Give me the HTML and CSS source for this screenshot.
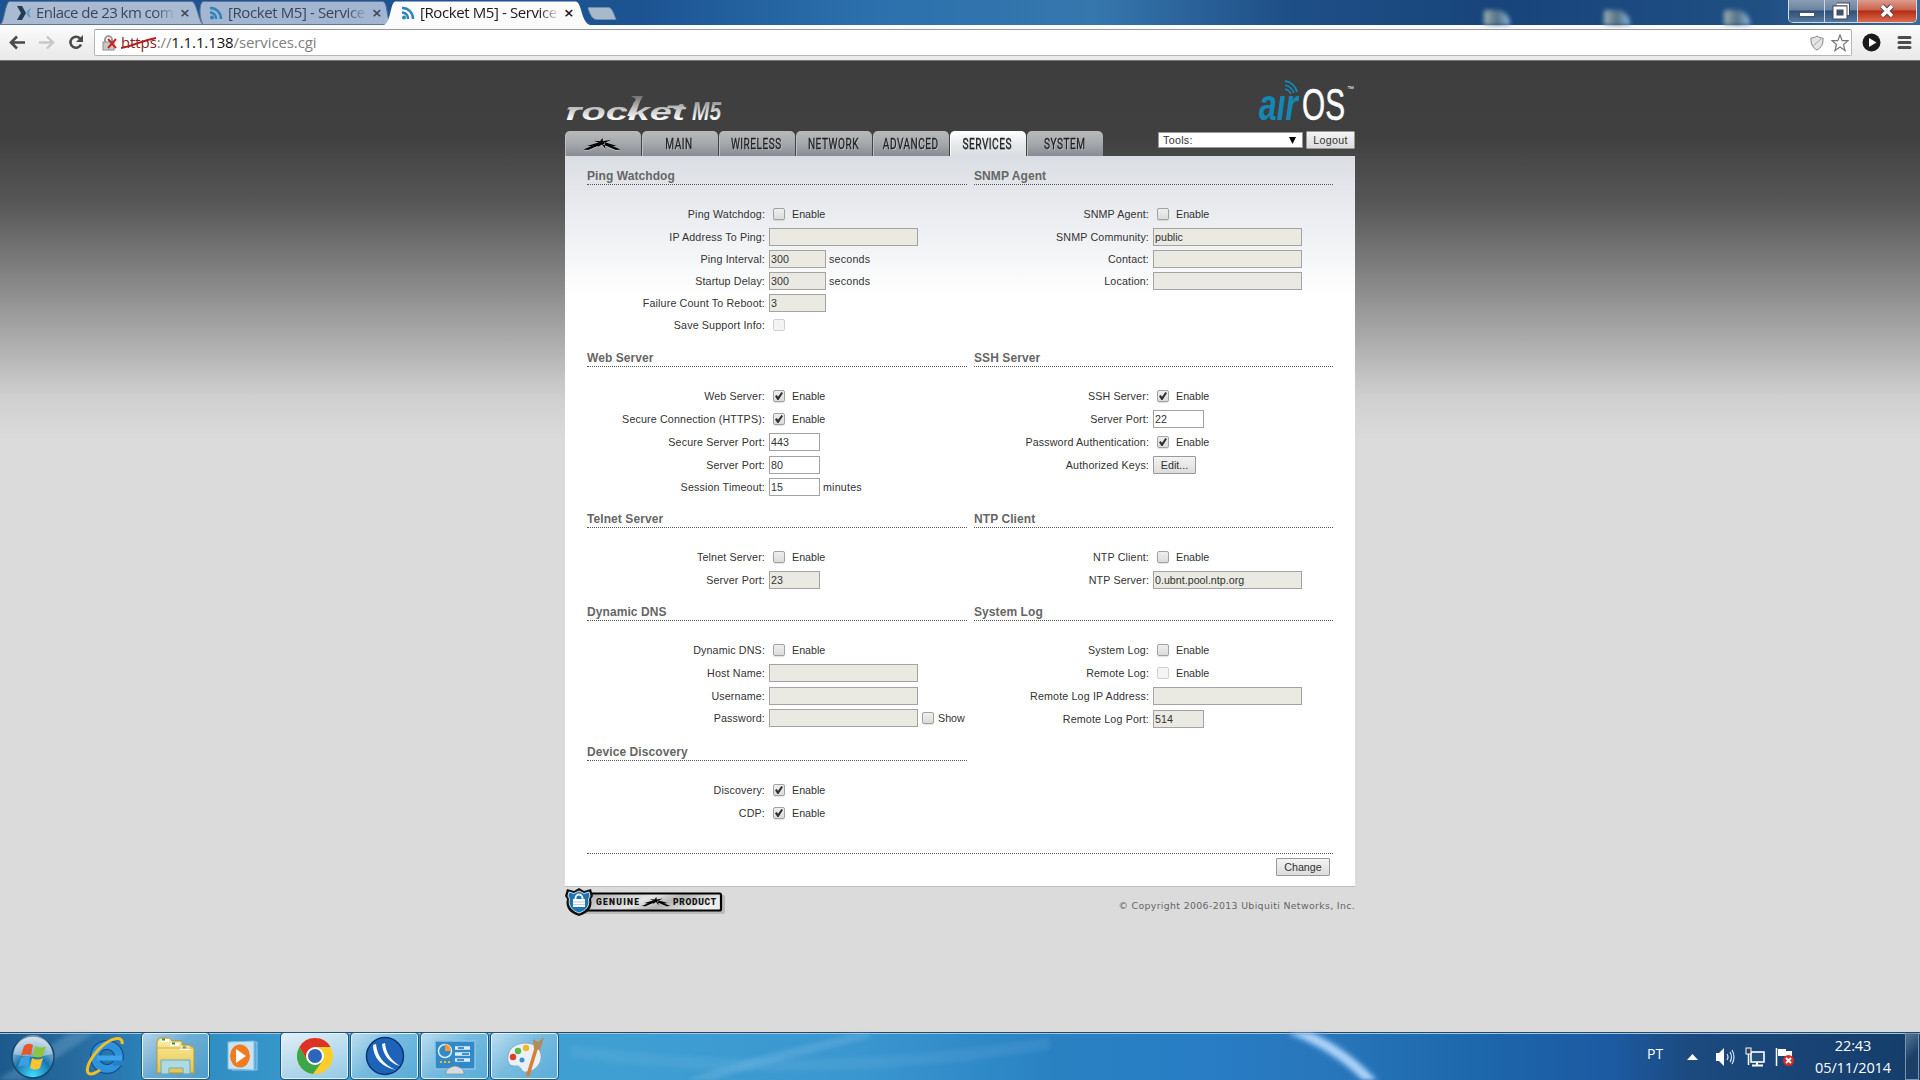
FILE: index.html
```html
<!DOCTYPE html>
<html lang="en">
<head>
    <meta charset="UTF-8">
    <title>[Rocket M5] - Services</title>
    <link rel="stylesheet" href="styles.css">
</head>
<body>
    <svg width="0" height="0" class="defs">
        <defs>
            <symbol id="rss" viewBox="0 0 14 14">
                <circle cx="3" cy="11.500" r="2" fill="#2f83bb"/>
                <path d="M1 6.500a6 6 0 0 1 6 6.500M1 2a10.500 10.500 0 0 1 11 11" fill="none" stroke="#2f83bb" stroke-width="2.400"/>
            </symbol>
            <symbol id="ubnt" viewBox="0 0 40 14">
                <path d="M0 12.500L17 5.500L19 7L5 13ZM40 12.500L23 5.500L21 7L35 13ZM4 8.500L17 4.500L18 5.500L8 9ZM36 8.500L23 4.500L22 5.500L32 9ZM11 3L18 3.500L20.500 0L21 3.500L30 2L23 5L23.500 11.500L20 7L15 10L18 5.500Z"/>
            </symbol>
            <linearGradient id="silver" gradientUnits="userSpaceOnUse" x1="0" y1="22" x2="0" y2="45">
                <stop offset="0" stop-color="#777"/>
                <stop offset=".5" stop-color="#c2c2c2"/>
                <stop offset="1" stop-color="#fff"/>
            </linearGradient>
            <linearGradient id="plate" x1="0" y1="0" x2="1" y2="0.300">
                <stop offset="0" stop-color="#aaa"/>
                <stop offset=".5" stop-color="#e6e6e6"/>
                <stop offset=".7" stop-color="#b5b5b5"/>
                <stop offset="1" stop-color="#eee"/>
            </linearGradient>
            <radialGradient id="orb" cx=".5" cy=".95" r=".9">
                <stop offset="0" stop-color="#3fe0ff"/>
                <stop offset=".5" stop-color="#1875b0"/>
                <stop offset="1" stop-color="#c5d6e4"/>
            </radialGradient>
            <linearGradient id="folder" x1="0" y1="0" x2="0" y2="1">
                <stop offset="0" stop-color="#fbeea0"/>
                <stop offset="1" stop-color="#e6c34d"/>
            </linearGradient>
        </defs>
    </svg>

    <header class="browser">
        <div class="tabstrip">
            <svg class="tab-shapes" width="640" height="25">
                <path d="M0 24.500C4 24 5 4 9 1.500H192C197 3 198 20 203 24.500Z" fill="#a9bad3" stroke="#5d7597"/>
                <path d="M203 24.500C199 18 199 3 203 1.500H383C388 3 386 18 391 24.500Z" fill="#a2b5d1" stroke="#5d7597"/>
                <path d="M384 25C391 22 390 4 395 1.500H576C582 3 581 22 590 25Z" fill="#fbfbfb"/>
                <path d="M589 7.500H608C612 7.500 613 12 616 19.500H597C592 19.500 590 14 588 8Z" fill="#a7bacc" stroke="#6f8dae"/>
            </svg>
            <div class="tab tab-first">
                <svg width="15" height="14" viewBox="0 0 15 14"><path d="M0 0H5L9 7L5 14H0L4 7Z" fill="#253b50"/><path d="M14 2C8 4 8 10 14 12L12 7Z" fill="#6c9dbb"/></svg>
                <span class="tab-title">Enlace de 23 km com</span>
                <span class="tab-close">×</span>
            </div>
            <div class="tab">
                <svg width="14" height="14"><use href="#rss"/></svg>
                <span class="tab-title">[Rocket M5] - Service</span>
                <span class="tab-close">×</span>
            </div>
            <div class="tab active">
                <svg width="14" height="14"><use href="#rss"/></svg>
                <span class="tab-title">[Rocket M5] - Service</span>
                <span class="tab-close">×</span>
            </div>
            <div class="desk-icons"><i></i><i></i><i></i></div>
            <div class="win-buttons">
                <span class="wb"><svg width="16" height="18"><rect x="0.500" y="10.500" width="15" height="4" fill="#fff" stroke="#456"/></svg></span>
                <span class="wb"><svg width="18" height="18" fill="none"><path d="M5 2.500H16V13" stroke="#445" stroke-width="4"/><path d="M5 2.500H16V13" stroke="#fff" stroke-width="2"/><rect x="3" y="6" width="10" height="9" stroke="#445" stroke-width="5"/><rect x="3" y="6" width="10" height="9" stroke="#fff" stroke-width="3"/></svg></span>
                <span class="wb wb-close"><svg width="16" height="14"><path d="M3 2L13 12M13 2L3 12" stroke="#545" stroke-width="5.500"/><path d="M3 2L13 12M13 2L3 12" stroke="#fff" stroke-width="3.500"/></svg></span>
            </div>
        </div>
        <div class="toolbar">
            <svg class="nav-icons" width="94" height="30" fill="none">
                <path d="M11 12.500H25M17 6.500L11 12.500L17 18.500" stroke="#4a4a4a" stroke-width="2.600"/>
                <path d="M39 12.500H53M47 6.500L53 12.500L47 18.500" stroke="#c8c8c8" stroke-width="2.400"/>
                <path d="M80 8.500A5.500 5.500 0 1 0 81 14.500" stroke="#4a4a4a" stroke-width="2.600"/>
                <path d="M83 5V12H76Z" fill="#4a4a4a"/>
            </svg>
            <div class="omnibox">
                <svg width="16" height="18"><path d="M3 9V6a3.500 4 0 0 1 7 0V9" fill="none" stroke="#999" stroke-width="2"/><rect x="1" y="8" width="11" height="8" fill="#c9c9c9" stroke="#8d8d8d"/><path d="M6 5L14 14M14 5L6 14" stroke="#c22" stroke-width="2"/></svg>
                <div class="url"><span class="bad">https</span>://<b>1.1.1.138</b>/services.cgi<svg class="strike" width="36" height="14"><path d="M0 12C12 10 20 5 35 2" fill="none" stroke="#b11c1c" stroke-width="2"/></svg></div>
                <div class="omni-right">
                    <svg width="14" height="16"><path d="M7 1C9 2.500 11 3 13 3C13.500 9 11 13 7 15C3 13 .5 9 1 3C3 3 5 2.500 7 1Z" fill="#e4e4e4" stroke="#858585"/><path d="M3 11L11 4" stroke="#aaa"/></svg>
                    <svg width="18" height="18"><path d="M9 1L11.200 6.600H17L12.500 10.500L14 16.500L9 13L4 16.500L5.500 10.500L1 6.600H6.800Z" fill="#fff" stroke="#777" stroke-width="1.200"/></svg>
                </div>
            </div>
            <svg width="68" height="30"><circle cx="19.500" cy="12.500" r="9" fill="#1a1a1a"/><path d="M17 8L24.500 12.500L17 17Z" fill="#fff"/><path d="M47 7.500H58M47 12.500H58M47 17.500H58" stroke="#4d4d4d" stroke-width="3" stroke-linecap="round"/></svg>
        </div>
    </header>

    <main class="page">
        <div class="wrap">
            <div class="logos">
                <svg width="165" height="56">
                    <g fill="url(#silver)" font-family="Liberation Sans" font-style="italic" font-weight="bold">
                        <text x="1" y="45" font-size="24" textLength="119" lengthAdjust="spacingAndGlyphs">rocket</text>
                        <path d="M65 35L71 24L66 21H78L67 41H62Z"/>
                        <path d="M4 32H16L14 34.500H2ZM103 30.500H120L118 33H102Z"/>
                        <text x="127" y="45" font-size="25" textLength="29" lengthAdjust="spacingAndGlyphs">M5</text>
                    </g>
                </svg>
                <svg width="100" height="56" font-family="Liberation Sans">
                    <text x="0" y="45" font-size="45" font-style="italic" font-weight="bold" fill="#1487b5" textLength="39" lengthAdjust="spacingAndGlyphs">aır</text>
                    <path d="M26 14A9 9 0 0 1 32 19M26 10A13 13 0 0 1 35 18M26 6A14 14 0 0 1 38 17" fill="none" stroke="#1487b5" stroke-width="1.800"/>
                    <text x="43" y="44.500" font-size="45" fill="#fff" stroke="#fff" stroke-width=".5" textLength="43" lengthAdjust="spacingAndGlyphs">OS</text>
                    <text x="88" y="16" font-size="7" fill="#fff">™</text>
                </svg>
            </div>
            <div class="menu">
                <nav>
                    <a><svg class="ubnt" width="38" height="13"><use href="#ubnt"/></svg></a>
                    <a><span>MAIN</span></a>
                    <a><span>WIRELESS</span></a>
                    <a><span>NETWORK</span></a>
                    <a><span>ADVANCED</span></a>
                    <a class="current"><span>SERVICES</span></a>
                    <a><span>SYSTEM</span></a>
                </nav>
                <div class="tools">
                    <div class="select"><span>Tools:</span><svg width="7" height="7"><path d="M0 0H7L3.500 7Z"/></svg></div>
                    <button class="logout">Logout</button>
                </div>
            </div>

            <form class="panel">
                <div class="sections">
                    <section>
                        <h2>Ping Watchdog</h2>
                        <div class="row"><label>Ping Watchdog:</label><input type="checkbox"><span>Enable</span></div>
                        <div class="row r22"><label>IP Address To Ping:</label><input class="wide off"></div>
                        <div class="row r22"><label>Ping Interval:</label><input class="mid off" value="300"><em>seconds</em></div>
                        <div class="row r22"><label>Startup Delay:</label><input class="mid off" value="300"><em>seconds</em></div>
                        <div class="row r22"><label>Failure Count To Reboot:</label><input class="mid off" value="3"></div>
                        <div class="row r24"><label>Save Support Info:</label><input type="checkbox" disabled></div>
                    </section>
                    <section>
                        <h2>SNMP Agent</h2>
                        <div class="row"><label>SNMP Agent:</label><input type="checkbox"><span>Enable</span></div>
                        <div class="row r22"><label>SNMP Community:</label><input class="wide off" value="public"></div>
                        <div class="row r22"><label>Contact:</label><input class="wide off"></div>
                        <div class="row r22"><label>Location:</label><input class="wide off"></div>
                    </section>

                    <section>
                        <h2>Web Server</h2>
                        <div class="row"><label>Web Server:</label><input type="checkbox" checked><span>Enable</span></div>
                        <div class="row"><label>Secure Connection (HTTPS):</label><input type="checkbox" checked><span>Enable</span></div>
                        <div class="row"><label>Secure Server Port:</label><input class="port" value="443"></div>
                        <div class="row r22"><label>Server Port:</label><input class="port" value="80"></div>
                        <div class="row"><label>Session Timeout:</label><input class="port" value="15"><em>minutes</em></div>
                    </section>
                    <section>
                        <h2>SSH Server</h2>
                        <div class="row"><label>SSH Server:</label><input type="checkbox" checked><span>Enable</span></div>
                        <div class="row"><label>Server Port:</label><input class="port" value="22"></div>
                        <div class="row"><label>Password Authentication:</label><input type="checkbox" checked><span>Enable</span></div>
                        <div class="row"><label>Authorized Keys:</label><button class="edit">Edit...</button></div>
                    </section>

                    <section>
                        <h2>Telnet Server</h2>
                        <div class="row"><label>Telnet Server:</label><input type="checkbox"><span>Enable</span></div>
                        <div class="row"><label>Server Port:</label><input class="port off" value="23"></div>
                    </section>
                    <section>
                        <h2>NTP Client</h2>
                        <div class="row"><label>NTP Client:</label><input type="checkbox"><span>Enable</span></div>
                        <div class="row"><label>NTP Server:</label><input class="wide off" value="0.ubnt.pool.ntp.org"></div>
                    </section>

                    <section>
                        <h2>Dynamic DNS</h2>
                        <div class="row"><label>Dynamic DNS:</label><input type="checkbox"><span>Enable</span></div>
                        <div class="row"><label>Host Name:</label><input class="wide off"></div>
                        <div class="row r22"><label>Username:</label><input class="wide off"></div>
                        <div class="row r25"><label>Password:</label><input class="wide off"><input type="checkbox"><span class="show">Show</span></div>
                    </section>
                    <section>
                        <h2>System Log</h2>
                        <div class="row"><label>System Log:</label><input type="checkbox"><span>Enable</span></div>
                        <div class="row"><label>Remote Log:</label><input type="checkbox" disabled><span>Enable</span></div>
                        <div class="row"><label>Remote Log IP Address:</label><input class="wide off"></div>
                        <div class="row"><label>Remote Log Port:</label><input class="port off" value="514"></div>
                    </section>

                    <section>
                        <h2>Device Discovery</h2>
                        <div class="row"><label>Discovery:</label><input type="checkbox" checked><span>Enable</span></div>
                        <div class="row"><label>CDP:</label><input type="checkbox" checked><span>Enable</span></div>
                    </section>
                </div>
                <div class="actions"><button class="change">Change</button></div>
            </form>

            <footer>
                <svg width="164" height="34">
                    <rect x="20" y="8" width="140" height="19" rx="2" fill="#bbb"/>
                    <rect x="20" y="6.500" width="136" height="17" rx="1.500" fill="url(#plate)" stroke="#000" stroke-width="2.200"/>
                    <path d="M14 1L19 4L26 2L28 9L26 12C28 20 24 26 14 29C4 26 0 20 2 12L0 9L2 2L9 4Z" fill="#111"/>
                    <path d="M14 4L19 6.500L24 5L25 9L23.500 12C25 19 21 23.500 14 26C7 23.500 3 19 4.500 12L3 9L4 5L9 6.500Z" fill="#1b75b5" stroke="#cfe3f2"/>
                    <path d="M10.500 13V11a3.500 3.500 0 0 1 7 0V13" fill="none" stroke="#fff" stroke-width="1.800"/>
                    <rect x="8" y="12" width="12" height="8" fill="#fff"/>
                    <path d="M8 15H20M8 17.500H20" stroke="#9ac" stroke-width=".6"/>
                    <g font-family="Roboto" font-weight="900" font-size="8.500" fill="#111">
                        <text x="31" y="18" textLength="43">GENUINE</text>
                        <text x="108" y="18" textLength="43">PRODUCT</text>
                    </g>
                    <use href="#ubnt" x="76" y="10" width="30" height="10"/>
                </svg>
                <p>© Copyright 2006-2013 Ubiquiti Networks, Inc.</p>
            </footer>
        </div>
    </main>

    <div class="taskbar">
        <svg class="streaks" width="1920" height="47" fill="none">
            <path d="M-10 60L90 -5" stroke="#8ab8d8" stroke-opacity=".3" stroke-width="14"/>
            <path d="M690 50C760 25 800 20 870 0" stroke="#9fd0ee" stroke-opacity=".2" stroke-width="9"/>
            <path d="M570 18C730 40 900 35 1050 10" stroke="#9fd0ee" stroke-opacity=".12" stroke-width="12"/>
            <path d="M1291 -4C1328 10 1353 28 1374 52" stroke="#5c9ddd" stroke-width="16" stroke-opacity=".5"/>
            <path d="M1291 -4C1328 10 1353 28 1374 52" stroke="#a9d0f7" stroke-width="9"/>
        </svg>
        <div class="task start">
            <svg width="46" height="46"><circle cx="23" cy="23" r="21" fill="url(#orb)" stroke="#16466e" stroke-width="1.500"/><path d="M4 20A19 19 0 0 1 42 20Q23 26 4 20Z" fill="#dfe9f0" opacity=".45"/><path d="M14 12Q18 8 23 11L21 21Q16 19 11 22Z" fill="#e8562a"/><path d="M25 12Q31 15 36 12L33 22Q28 25 23 22Z" fill="#8cc63e"/><path d="M11 24Q16 21 20 23L18 33Q14 30 8 33Z" fill="#3f9fe0"/><path d="M22 24Q27 27 33 24L30 34Q25 37 20 34Z" fill="#fcc530"/></svg>
        </div>
        <div class="task ie">
            <svg width="42" height="42" fill="none"><circle cx="22" cy="22" r="12" stroke="#104f96" stroke-width="10"/><circle cx="22" cy="22" r="12" stroke="#2f93dc" stroke-width="7.500"/><path d="M12 23H37" stroke="#39a5e8" stroke-width="5"/><path d="M28 28H40" stroke="#2480c2" stroke-width="5"/><path d="M37 9C39 1 27 1 14 14C2 27 -1 39 6 39C9 39 12 37 15 35" stroke="#f5bd24" stroke-width="3"/></svg>
        </div>
        <div class="task btn">
            <svg width="42" height="40"><path d="M2 6L4 2H15L17 5H27V9H34L39 12V37H2Z" fill="url(#folder)" stroke="#b99531"/><path d="M6 3H14V6H6ZM15 7H24V10H15ZM25 11H35V14H25Z" fill="#fff"/><path d="M7 3.500H10M17 7.500H20M28 11.500H31" stroke="#398b48" stroke-width="2"/><path d="M2 12H39" stroke="#d1b04c"/><path d="M6 24H35V38H28V32H14V38H6Z" fill="#a9dcf0" opacity=".9" stroke="#5aa6c8"/></svg>
        </div>
        <div class="task plain">
            <svg width="36" height="38"><path d="M6 5L31 5V33H6Z" fill="#5ba9d7" stroke="#85c8ec"/><path d="M2 5L28 4V33L2 32Z" fill="#c8e4f4" stroke="#7fbbe0"/><ellipse cx="14" cy="19" rx="10" ry="11.500" fill="#f27b20"/><path d="M10 12V26L20 19Z" fill="#fff"/></svg>
        </div>
        <div class="task btn lit">
            <svg width="38" height="38" viewBox="0 0 38 38"><circle cx="19" cy="19" r="18" fill="#fccd2b"/><path d="M3.400 10A18 18 0 0 1 34.600 10H19L11.200 23.500Z" fill="#dd3327"/><path d="M3.400 10A18 18 0 0 0 17 37L26.800 23.500L11.200 23.500Z" fill="#3da648"/><circle cx="19" cy="19" r="9" fill="#fff"/><circle cx="19" cy="19" r="7" fill="#2c66b8"/></svg>
        </div>
        <div class="task btn">
            <svg width="40" height="40" fill="none"><circle cx="20" cy="20" r="18.500" fill="#1d64b9" stroke="#0c3277" stroke-width="1.500"/><path d="M8 9C8 21 16 31 31 34C19 29 12 20 11 8ZM17 8C18 19 24 27 35 30C27 25 21 18 20 7Z" fill="#fff"/></svg>
        </div>
        <div class="task btn">
            <svg width="42" height="40"><rect x="1" y="5" width="40" height="28" fill="#3289c8" stroke="#8cc4e7" stroke-width="1.500"/><circle cx="11" cy="15" r="6.500" fill="none" stroke="#d7eefb" stroke-width="1.500"/><path d="M11 15V8A7 7 0 0 1 17 15Z" fill="#f39a35"/><path d="M21 12H36M21 18H36M21 24H36" stroke="#d9effc" stroke-width="3.500"/><path d="M24 12H30M28 18H35M23 24H30" stroke="#1b6dae" stroke-width="1.500"/><path d="M6 26H16" stroke="#f5bb2d" stroke-width="2" stroke-dasharray="2"/><path d="M12 38C12 33 16 31 21 30C26 31 30 33 30 38Z" fill="#d9dcdf" stroke="#7c8d99" stroke-width=".7"/></svg>
        </div>
        <div class="task btn">
            <svg width="40" height="42"><path d="M4 17C8 7 26 5 33 13C40 21 35 35 22 37C15 38 17 30 11 31C3 32 1 25 4 17Z" fill="#e8f1f7" stroke="#8ba9bd"/><circle cx="8" cy="22" r="3.200" fill="#e33b2a"/><circle cx="13" cy="16" r="3.200" fill="#58b947"/><circle cx="21" cy="13" r="3.200" fill="#f3b926"/><circle cx="17" cy="25" r="2.500" fill="#3b8fd0"/><path d="M23 40L31 14" stroke="#d67f35" stroke-width="3.500" stroke-linecap="round"/><path d="M29 14L28 4L33 7L39 2L35 15Z" fill="#b58a55"/></svg>
        </div>

        <div class="tray">
            <span class="lang">PT</span>
            <svg width="11" height="6"><path d="M0 6L5.500 0L11 6Z" fill="#fff"/></svg>
            <svg width="20" height="22" fill="none"><path d="M1 7H4L9 2V20L4 15H1Z" fill="#fff"/><path d="M12 8Q14 11 12 14M15 6Q18 11 15 16M17 4Q21 11 17 18" stroke="#d5e3f0" stroke-width="1.200"/></svg>
            <svg width="20" height="20" fill="none"><rect x="6" y="5" width="13" height="10" fill="#25517f" stroke="#fff" stroke-width="1.600"/><path d="M7 18.500H18M12 15V18" stroke="#fff" stroke-width="2"/><rect x="1" y="1" width="5" height="6" fill="#345" stroke="#fff"/><path d="M3.500 7V18" stroke="#fff" stroke-width="1.500"/></svg>
            <svg width="20" height="20"><path d="M1.500 1V19" stroke="#fff" stroke-width="1.500"/><path d="M3 2H11V4H17V11H10V9H3Z" fill="#fff"/><circle cx="13.500" cy="13.500" r="5.500" fill="#d62b25"/><path d="M11 11L16 16M16 11L11 16" stroke="#fff" stroke-width="1.800"/></svg>
            <div class="clock"><span>22:43</span><span>05/11/2014</span></div>
            <div class="show-desktop"></div>
        </div>
    </div>
</body>
</html>
```
FILE: styles.css
```css
* {
    box-sizing: border-box;
}

body {
    margin: 0;
    width: 1920px;
    height: 1080px;
    overflow: hidden;
    display: flex;
    flex-direction: column;
    font-family: "Liberation Sans", Arial, sans-serif;
    font-size: 10.7px;
    color: #333;
}

.defs {
    position: absolute;
}

svg {
    flex: none;
}

/* browser window */
.browser {
    height: 61px;
    flex: none;
}

.tabstrip {
    position: relative;
    height: 25px;
    display: flex;
    align-items: center;
    padding-left: 17px;
    background: linear-gradient(90deg, #1c5391 0, #1c5391 33%, #2b70ad 45%, #3677ad 57%, #1e4f86 67%, #17457b 78%, #204f84 92%, #3a6a9c 100%);
}

.tab-shapes {
    position: absolute;
    left: 0;
    top: 0;
}

.tab {
    position: relative;
    display: flex;
    align-items: center;
    width: 192px;
    height: 25px;
    font-family: "Open Sans", sans-serif;
    font-size: 15px;
    color: #3d4656;
}

.tab-first .tab-title {
    margin-left: 4px;
    letter-spacing: -.55px;
}

.tab.active {
    color: #1b1b1b;
}

.tab-title {
    width: 140px;
    margin: -2px 0 0 5px;
    overflow: hidden;
    white-space: nowrap;
    letter-spacing: -.4px;
    -webkit-mask-image: linear-gradient(90deg, #000 85%, transparent);
}

.tab-close {
    margin-left: 4px;
    font-size: 17px;
    font-weight: 600;
}

.desk-icons {
    display: flex;
    gap: 94px;
    margin-left: 891px;
    align-self: flex-end;
}

.desk-icons i {
    width: 26px;
    height: 15px;
    border-radius: 3px 14px 0 0;
    background: linear-gradient(90deg, #9eb2b5, #557084 50%, #8fb8df);
    filter: blur(2px);
}

.win-buttons {
    position: absolute;
    left: 1788px;
    top: 0;
    display: flex;
    width: 129px;
    height: 23px;
    border: 1px solid #d0dbe6;
    border-top: 0;
    border-radius: 0 0 5px 5px;
    overflow: hidden;
}

.wb {
    width: 36px;
    display: flex;
    align-items: center;
    justify-content: center;
    border-right: 1px solid #ccd6e1;
    background: linear-gradient(#8a9db4, #6b83a0 45%, #2f5078 50%, #5679a0);
}

.wb:nth-child(2) {
    width: 33px;
}

.wb-close {
    flex: 1;
    border: 0;
    background: linear-gradient(#dd9c8c, #ca6450 45%, #b42c14 50%, #dc6b4c);
}

.toolbar {
    display: flex;
    height: 36px;
    padding-top: 4px;
    background: linear-gradient(#fbfbfb, #e9e9e9);
    border-bottom: 1px solid #777;
}

.toolbar > svg {
    margin-top: 1px;
}

.omnibox {
    width: 1758px;
    height: 27px;
    display: flex;
    align-items: center;
    padding: 0 2px 0 7px;
    border: 1px solid #b5b5b5;
    border-top-color: #999;
    border-radius: 2px;
    background: #fff;
}

.url {
    position: relative;
    margin: -2px 0 0 3px;
    font-family: "Open Sans", sans-serif;
    font-size: 15px;
    letter-spacing: -.11px;
    color: #808080;
}

.url b {
    font-weight: normal;
    color: #111;
}

.bad {
    color: #8d2323;
}

.strike {
    position: absolute;
    left: 0;
    top: 4px;
}

.omni-right {
    display: flex;
    align-items: center;
    gap: 7px;
    margin-left: auto;
}

/* airOS page */
.page {
    height: 971px;
    flex: none;
    background: linear-gradient(#3e3e3e 0, #404040 75px, #565656 140px, #7d7d7d 205px, #a9a9a9 275px, #cfcfcf 335px, #dbdbdb 380px);
}

.wrap {
    width: 790px;
    margin-left: 565px;
    padding-top: 14px;
}

.logos {
    display: flex;
    justify-content: space-between;
    height: 56px;
    margin-right: -4px;
}

.menu {
    display: flex;
    justify-content: space-between;
    height: 25px;
    letter-spacing: .3px;
}

nav {
    display: flex;
    gap: 1px;
}

nav a {
    width: 76px;
    display: flex;
    align-items: center;
    justify-content: center;
    padding-top: 1px;
    border-radius: 5px 5px 0 0;
    border-left: 1px solid #bdbdbd;
    background: linear-gradient(#b9b9b9, #a8abae 45%, #888d93);
    font-family: Roboto, sans-serif;
    font-size: 14px;
    color: #222;
    text-shadow: 1px 1px 0 #c5c8cc;
    -webkit-text-stroke: .3px #222;
}

nav span {
    margin-left: -2px;
    letter-spacing: .7px;
    transform: scaleX(.72);
}

nav a.current {
    background: linear-gradient(#fff, #e4e6ea 60%, #dadde2);
    border-color: #fff;
}

.ubnt {
    margin-left: -4px;
    filter: drop-shadow(0 1px 0 #c0c0c0);
}

.tools {
    display: flex;
    gap: 3px;
}

.select {
    width: 145px;
    height: 16px;
    margin-top: 1px;
    padding: 0 6px 0 4px;
    display: flex;
    align-items: center;
    justify-content: space-between;
    border: 1px solid #999;
    background: #fff;
}

button {
    height: 18px;
    padding: 0;
    border: 1px solid #999;
    border-radius: 1px;
    background: linear-gradient(#f4f4f4, #dcdcdc);
    font: inherit;
    letter-spacing: inherit;
    line-height: 15px;
    color: #333;
}

.logout {
    width: 49px;
}

.panel {
    height: 731px;
    padding: 0 22px;
    border-bottom: 1px solid #bdbdbd;
    background: linear-gradient(#dadde3 0, #e6e8ec 40px, #fff 142px);
}

.sections {
    display: grid;
    grid-template-columns: 380px 359px;
    column-gap: 7px;
}

h2 {
    height: 29px;
    margin: 0 0 18px;
    padding-top: 13px;
    border-bottom: 1px dotted #555;
    font-size: 12px;
    line-height: 15px;
    letter-spacing: .08px;
    color: #666;
}

.row {
    display: flex;
    height: 23px;
    padding-top: 2px;
    line-height: 19px;
}

.r22 {
    height: 22px;
}

.r24 {
    height: 24px;
}

.r25 {
    height: 25px;
}

label {
    width: 178px;
    margin-right: 4px;
    text-align: right;
    white-space: nowrap;
    letter-spacing: .15px;
}

section:nth-child(even) label {
    width: 175px;
}

.row input {
    height: 18px;
    padding: 0 2px 0 1px;
    border: 1px solid #a3a3a3;
    border-radius: 0;
    background: #fff;
    font: inherit;
    color: #333;
}

.row .off {
    background: #eaeae2;
}

.wide {
    width: 149px;
}

.mid {
    width: 57px;
}

.port {
    width: 51px;
}

.row input[type=checkbox] {
    appearance: none;
    width: 12px;
    height: 12px;
    margin: 3px 7px 0 4px;
    padding: 0;
    border: 1px solid #a2a2a2;
    border-radius: 2px;
    background: linear-gradient(#efefef, #dcdcdc);
    box-shadow: 0 1px 1px rgba(0, 0, 0, .12);
}

.row input[type=checkbox]:disabled {
    border-color: #d0d0d0;
    background: #f4f4f4;
    box-shadow: none;
}

.row input:checked::after {
    content: "";
    display: block;
    width: 8px;
    height: 8px;
    margin: 1px;
    background: #333;
    clip-path: polygon(0 52%, 20% 38%, 38% 60%, 80% 0, 100% 14%, 44% 100%, 30% 100%);
}

.row em {
    margin-left: 3px;
    font-style: normal;
    letter-spacing: .2px;
}

.row .show {
    margin-left: -3px;
}

.edit {
    width: 43px;
}

.actions {
    display: flex;
    justify-content: flex-end;
    margin-top: 28px;
    padding: 4px 3px 0 0;
    border-top: 1px dotted #555;
}

.change {
    width: 54px;
}

footer {
    display: flex;
    justify-content: space-between;
}

footer p {
    margin: 13px 0 0;
    font-family: "DejaVu Sans", Verdana, sans-serif;
    font-size: 9.4px;
    letter-spacing: .34px;
    color: #666;
}

/* windows taskbar */
.taskbar {
    position: relative;
    height: 48px;
    flex: none;
    display: flex;
    padding-left: 8px;
    border-top: 1px solid #26496a;
    box-shadow: inset 0 1px 0 #9bc7e2;
    background: linear-gradient(90deg, #1c5a8d 0, #276b9f 4%, #2b86bd 8%, #3b9dd0 17%, #3f9fd3 32%, #3a96cf 45%, #2981c2 55%, #287dc4 63%, #2876bb 69%, #1c65aa 78%, #1c5aa2 84%, #1c4a7f 88%, #143d6a 100%);
}

/* wallpaper light seen through the glass */
.streaks {
    position: absolute;
    left: 0;
    top: 0;
    filter: blur(2px);
}

.task {
    position: relative;
    display: flex;
    align-items: center;
    justify-content: center;
    height: 46px;
}

.start {
    width: 50px;
    padding-top: 1px;
}

.ie {
    width: 84px;
    padding-left: 12px;
}

.btn {
    width: 67px;
    margin-right: 3px;
    border: 1px solid #e0f3fc;
    border-radius: 3px;
    outline: 1px solid #205577;
    background: linear-gradient(135deg, rgba(255, 255, 255, .65), rgba(255, 255, 255, .3) 45%, rgba(255, 255, 255, .14));
}

.lit {
    background: linear-gradient(160deg, rgba(255, 255, 255, .85), rgba(255, 255, 255, .45));
}

.plain {
    width: 69px;
    padding-right: 6px;
}

.tray {
    position: absolute;
    left: 1647px;
    top: 0;
    height: 47px;
    display: flex;
    align-items: center;
    color: #fff;
    font-family: "Open Sans", sans-serif;
    font-size: 14.5px;
}

.lang {
    width: 40px;
    margin-top: -6px;
    font-size: 14px;
}

.tray > svg {
    margin-right: 10px;
}

.tray > svg:nth-of-type(1) {
    margin-right: 17px;
}

.clock {
    display: flex;
    flex-direction: column;
    align-items: center;
    width: 78px;
    margin-left: 9px;
    line-height: 22px;
    letter-spacing: -.1px;
    white-space: nowrap;
}

.show-desktop {
    width: 14px;
    height: 47px;
    margin-left: 13px;
    border: 1px solid #7894ae;
    background: linear-gradient(135deg, #547795, #1b4169 50%);
}
```
